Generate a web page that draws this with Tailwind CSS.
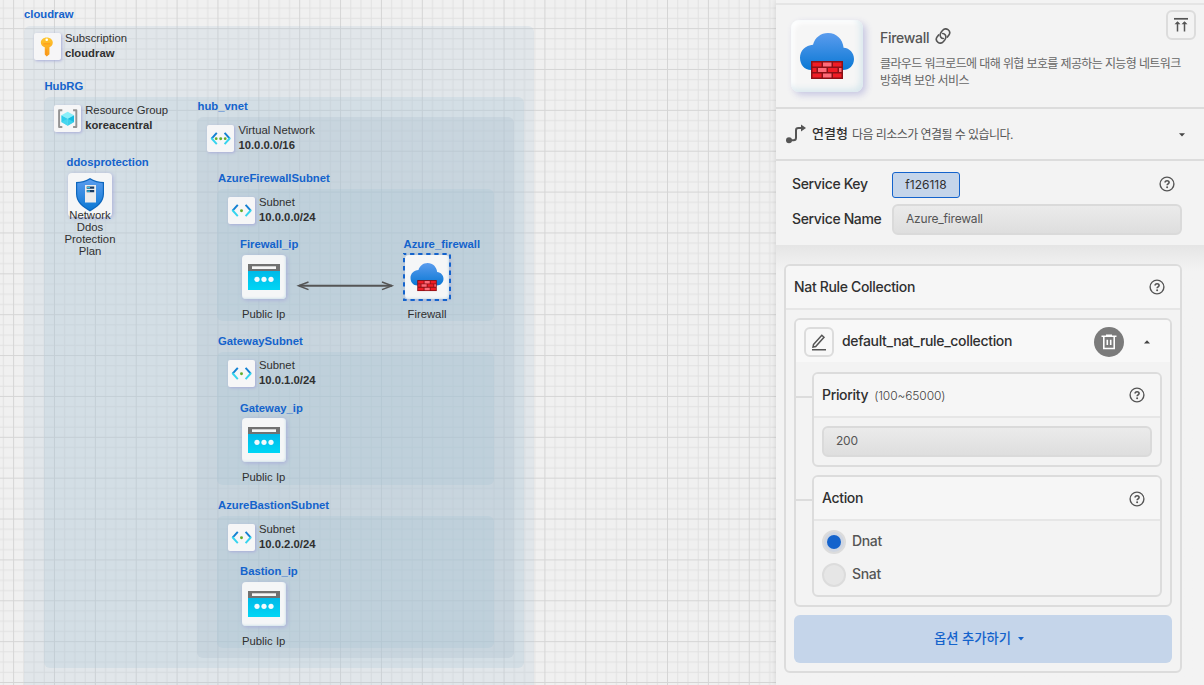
<!DOCTYPE html>
<html lang="ko">
<head>
<meta charset="utf-8">
<title>cloudraw</title>
<script src="https://cdn.jsdelivr.net/npm/@tailwindcss/browser@4"></script>
</head>
<body class="w-[1204px] h-[685px] overflow-hidden bg-[#f0f0f0] font-['Inter','Noto_Sans_CJK_KR',sans-serif]">
<svg class="absolute size-0">
  <defs>
    <linearGradient id="gKey" x1="0" y1="0" x2="0" y2="1"><stop offset="0" stop-color="#ffc72e"/><stop offset="1" stop-color="#f79a1b"/></linearGradient>
    <linearGradient id="gBlue" x1="0" y1="0" x2="0" y2="1"><stop offset="0" stop-color="#5b9cee"/><stop offset="1" stop-color="#0a78d4"/></linearGradient>
    <linearGradient id="gCy" x1="0" y1="0" x2="0" y2="1"><stop offset="0" stop-color="#00b9e8"/><stop offset="1" stop-color="#00d6f5"/></linearGradient>
  </defs>
  <symbol id="key" viewBox="0 0 28 28"><path d="M13 4.500c3.600 0 6.200 2.200 6.200 5.200 0 2.400-1.400 4.100-3.400 4.900v7.200L13 24l-2-2V14.600C8.600 13.700 7 12.100 7 9.700 7 6.700 9.500 4.500 13 4.500z" fill="url(#gKey)"/><circle cx="13" cy="7" r="1.300" fill="#fff"/><path d="M9.700 10.500h6.800v1.300H9.700z" fill="#ff9b1a"/><path d="M12 16.500h.8v5.500h-.8z" fill="#ff8c1a"/></symbol>
  <symbol id="rg" viewBox="0 0 28 28"><path d="M8.500 5.300H5.200v17.200h3.300M19.500 5.300h3.300v17.200h-3.300" fill="none" stroke="#949494" stroke-width="2" stroke-linejoin="round"/><path d="M14 7l6.500 3.500L14 14 7.500 10.500z" fill="#8aeffa"/><path d="M7.500 10.500L14 14v7.300l-6.500-3.800z" fill="#30cdea"/><path d="M20.500 10.500L14 14v7.300l6.500-3.800z" fill="#16bde2"/><path d="M7.500 17.500L14 14l6.500 3.500L14 21.300z" fill="#55dcf2" opacity=".6"/></symbol>
  <symbol id="angles" viewBox="0 0 28 28"><g fill="none" stroke-width="2" stroke-linecap="butt"><path d="M10 8l-5.300 6" stroke="#1380d2"/><path d="M4.400 13.300l5.600 6.200" stroke="#35d4ee"/><path d="M18 8l5.300 6" stroke="#1380d2"/><path d="M23.600 13.300L18 19.500" stroke="#35d4ee"/></g></symbol>
  <symbol id="subnet" viewBox="0 0 28 28"><use href="#angles"/><circle cx="13.800" cy="14" r="1.500" fill="#62ad2b"/></symbol>
  <symbol id="vnet" viewBox="0 0 28 28"><use href="#angles"/><g fill="#62ad2b"><circle cx="9.400" cy="14" r="1.400"/><circle cx="14" cy="14" r="1.500"/><circle cx="18.600" cy="14" r="1.400"/></g></symbol>
  <symbol id="ip" viewBox="0 0 44 44"><path d="M6 9h32v8H6z" fill="#717171"/><path d="M10 11.300h24v2.700H10z" fill="#f6f6f6"/><path d="M6 16h32v19H6z" fill="url(#gCy)"/><g fill="#f3fafd"><circle cx="15" cy="24.300" r="2.600"/><circle cx="22" cy="24.300" r="2.600"/><circle cx="29" cy="24.300" r="2.600"/></g></symbol>
  <symbol id="fw" viewBox="0 0 72 72"><path d="M20 50C13.500 50 9 44.500 9 37.700c0-7.200 5.500-12.600 13-13C24 17.500 29.800 13 37 13c8.600 0 14.700 6.300 15.600 14.700C58.700 28 63 33 63 39c0 6.400-4.800 11-11 11z" fill="url(#gBlue)"/><path d="M20 41h32v18H20z" fill="#8a1016"/><g fill="#f01c25"><path d="M21.500 42.500h9v4h-9zM42 42.500h8.500v4H42zM21.500 48h4v4h-4zM37 48h9.500v4H37zM21.500 53.500h9v4h-9zM42 53.500h8.500v4H42z"/></g><g fill="#ff6a78"><path d="M32 42.500h8.500v4H32zM27 48h8.500v4H27zM48 48h2.500v4H48zM32 53.500h8.500v4H32z"/></g></symbol>
  <symbol id="shield" viewBox="0 0 44 44"><path d="M22 5c4 3 9 3.800 14 4v12c0 8-6.500 13.200-14 17.500C14.500 34.200 8 29 8 21V9c5-.2 10-1 14-4z" fill="#0d66bd"/><path d="M22 6.500c4 2.500 8.300 3.400 12.800 3.700V21c0 7.200-6 12.200-12.800 16.100C15.200 33.200 9.200 28.200 9.200 21V10.200c4.500-.3 8.800-1.200 12.800-3.700z" fill="url(#gBlue)"/><path d="M17 12h11v17.500H17z" fill="#ececec"/><path d="M18.700 13.500h7.500v2.300h-7.500zM18.700 17h7.500v2.300h-7.500z" fill="#173a63"/><path d="M19 14h3v1.200h-3zM19 17.500h3v1.200h-3z" fill="#35c5e8"/></symbol>
  <symbol id="help" viewBox="0 0 16 16"><circle cx="8" cy="8" r="6.900" fill="none" stroke="#555" stroke-width="1.400"/><path d="M6.100 6.600c0-1.200.8-1.900 2-1.900s2 .7 2 1.700c0 1.400-2 1.500-2 2.900" fill="none" stroke="#555" stroke-width="1.600"/><circle cx="8.100" cy="11.200" r="1" fill="#555"/></symbol>
</svg>
<div class="flex h-full">
  <!-- diagram canvas -->
  <main class="relative w-[776px] h-full shrink-0 overflow-hidden font-['Liberation_Sans',sans-serif] text-[11.300px] leading-[14px] text-[#303030] whitespace-nowrap">
    <svg class="absolute inset-0" width="776" height="685">
      <defs><pattern id="grid" x="13.100" y="28.100" width="40.870" height="40.870" patternUnits="userSpaceOnUse">
        <path d="M10.700 0v40.870M20.900 0v40.870M31.150 0v40.870M0 10.700h40.870M0 20.900h40.870M0 31.150h40.870" stroke="#e1e1e1" stroke-width="1"/>
        <path d="M.5 0v40.870M0 .5h40.870" stroke="#d5d5d5" stroke-width="1"/>
      </pattern></defs>
      <rect width="776" height="685" fill="url(#grid)"/>
    </svg>
    <div class="absolute left-[24px] top-[26px] w-[510px] h-[680px] rounded-md bg-[#b3c7d7]/25"></div>
    <div class="absolute left-[44px] top-[97px] w-[480px] h-[571px] rounded-md bg-[#acc8d8]/25"></div>
    <div class="absolute left-[197px] top-[117px] w-[317px] h-[541px] rounded-md bg-[#a7bdcc]/25"></div>
    <div class="absolute left-[217px] top-[189px] w-[277px] h-[132px] rounded-md bg-[#a4c3d3]/25"></div>
    <div class="absolute left-[217px] top-[352px] w-[277px] h-[133px] rounded-md bg-[#a4c3d3]/25"></div>
    <div class="absolute left-[217px] top-[516px] w-[277px] h-[132px] rounded-md bg-[#a4c3d3]/25"></div>

    <div class="font-bold text-[#1463cc]">
      <span class="absolute left-[24px] top-[7px]">cloudraw</span>
      <span class="absolute left-[44.400px] top-[79px]">HubRG</span>
      <span class="absolute left-[66.500px] top-[155px]">ddosprotection</span>
      <span class="absolute left-[197.500px] top-[99px]">hub_vnet</span>
      <span class="absolute left-[218px] top-[171px]">AzureFirewallSubnet</span>
      <span class="absolute left-[240px] top-[237px]">Firewall_ip</span>
      <span class="absolute left-[403.500px] top-[237px]">Azure_firewall</span>
      <span class="absolute left-[218px] top-[334px]">GatewaySubnet</span>
      <span class="absolute left-[240px] top-[401px]">Gateway_ip</span>
      <span class="absolute left-[218px] top-[498px]">AzureBastionSubnet</span>
      <span class="absolute left-[240px] top-[564px]">Bastion_ip</span>
    </div>

    <div class="absolute left-[34px] top-[32px] flex gap-[3.500px]"><div class="mt-[0.700px] size-[27.400px] rounded-xs bg-[#f6f6f7] shadow-[1px_1px_3px_#a9add8]"><svg class="size-[27.400px]"><use href="#key"/></svg></div><div class="-mt-px leading-[15px]">Subscription<br><b>cloudraw</b></div></div>
    <div class="absolute left-[54px] top-[104px] flex gap-[3.800px]"><div class="mt-[0.700px] size-[27.400px] rounded-xs bg-[#f6f6f7] shadow-[1px_1px_3px_#a9add8]"><svg class="size-[27.400px]"><use href="#rg"/></svg></div><div class="-mt-px leading-[15px]">Resource Group<br><b>koreacentral</b></div></div>
    <div class="absolute left-[207px] top-[124px] flex gap-[4px]"><div class="mt-[0.700px] size-[27.400px] rounded-xs bg-[#f6f6f7] shadow-[1px_1px_3px_#a9add8]"><svg class="size-[27.400px]"><use href="#vnet"/></svg></div><div class="-mt-px leading-[15px]">Virtual Network<br><b>10.0.0.0/16</b></div></div>
    <div class="absolute left-[227.700px] top-[196px] flex gap-[3.900px]"><div class="mt-[0.700px] size-[27.400px] rounded-xs bg-[#f6f6f7] shadow-[1px_1px_3px_#a9add8]"><svg class="size-[27.400px]"><use href="#subnet"/></svg></div><div class="-mt-px leading-[15px]">Subnet<br><b>10.0.0.0/24</b></div></div>
    <div class="absolute left-[227.700px] top-[359px] flex gap-[3.900px]"><div class="mt-[0.700px] size-[27.400px] rounded-xs bg-[#f6f6f7] shadow-[1px_1px_3px_#a9add8]"><svg class="size-[27.400px]"><use href="#subnet"/></svg></div><div class="-mt-px leading-[15px]">Subnet<br><b>10.0.1.0/24</b></div></div>
    <div class="absolute left-[227.700px] top-[523px] flex gap-[3.900px]"><div class="mt-[0.700px] size-[27.400px] rounded-xs bg-[#f6f6f7] shadow-[1px_1px_3px_#a9add8]"><svg class="size-[27.400px]"><use href="#subnet"/></svg></div><div class="-mt-px leading-[15px]">Subnet<br><b>10.0.2.0/24</b></div></div>

    <div class="absolute left-[68px] top-[173px] size-11 rounded-sm bg-[#f5f6f7] shadow-[1px_1px_4px_#a9add8]"><svg class="size-11"><use href="#shield"/></svg></div>
    <div class="absolute left-[60px] top-[209px] w-[60px] text-center leading-[12.100px]">Network<br>Ddos<br>Protection<br>Plan</div>

    <div class="absolute left-[241.700px] top-[255px] size-11 rounded-sm bg-[#f5f6f7] shadow-[1px_1px_4px_#a9add8,inset_-1px_-1px_2px_#d5e5ec]"><svg class="size-11"><use href="#ip"/></svg></div>
    <div class="absolute left-[242px] top-[307px]">Public Ip</div>
    <div class="absolute left-[241.700px] top-[418.300px] size-11 rounded-sm bg-[#f5f6f7] shadow-[1px_1px_4px_#a9add8,inset_-1px_-1px_2px_#d5e5ec]"><svg class="size-11"><use href="#ip"/></svg></div>
    <div class="absolute left-[242px] top-[470px]">Public Ip</div>
    <div class="absolute left-[241.700px] top-[582px] size-11 rounded-sm bg-[#f5f6f7] shadow-[1px_1px_4px_#a9add8,inset_-1px_-1px_2px_#d5e5ec]"><svg class="size-11"><use href="#ip"/></svg></div>
    <div class="absolute left-[242px] top-[634px]">Public Ip</div>

    <svg class="absolute left-[296px] top-[278px]" width="100" height="16" fill="none" stroke="#555" stroke-width="1.500"><path d="M3 7.700h93" stroke-width="2"/><path d="M12.500 4L2.500 7.700l10 3.900M86 4l10 3.700-10 3.900"/></svg>

    <div class="absolute left-[405px] top-[255px] size-11 rounded-sm bg-[#f5f6f7] shadow-[1px_1px_4px_#a9add8,inset_-1px_-1px_2px_#d5e5ec]"><svg class="size-11"><use href="#fw"/></svg></div>
    <svg class="absolute left-[402px] top-[252px]" width="50" height="50"><rect x="2" y="2" width="46" height="46" fill="none" stroke="#1463cc" stroke-width="2" stroke-dasharray="4.300 3.777" stroke-dashoffset="2"/></svg>
    <div class="absolute left-[407.500px] top-[307px]">Firewall</div>
  </main>

  <!-- properties panel -->
  <aside class="relative z-10 w-[428px] h-full bg-[#f3f3f3] shadow-[0_0_6px_#00000022] flex flex-col text-[#303030]">
    <div class="h-[5px] shrink-0 border-b-2 border-[#e5e5e5]"></div>
    <header class="h-[104px] shrink-0 border-b-2 border-[#dcdcdc] flex pl-[15px] pt-[15px]">
      <div class="size-[72px] rounded-lg bg-[#f6f6f6] shadow-[3px_3px_7px_#c6c6e2,inset_-3px_-3px_6px_#d9e8ee,inset_3px_3px_5px_#fff]"><svg class="size-[72px]"><use href="#fw"/></svg></div>
      <div class="ml-[17px] pt-[8px] w-[310px] shrink-0">
        <div class="flex items-center h-[18px] gap-[6px] text-[14px] text-[#555] font-medium tracking-[-0.280px]"><span>Firewall</span>
          <svg width="16" height="16" viewBox="0 0 16 16" class="-mt-[3px]" fill="none" stroke="#555" stroke-width="1.600" stroke-linecap="round"><path d="M8.300 10.500C6.200 10.300 4.900 8.500 5.200 6.500c.1-1 .5-1.600 1-2.400L7.500 2.500C9 .8 11.300.5 13 1.700c1.800 1.300 2.100 3.600.9 5.400l-1.500 2"/><path d="M7.700 5.500c2.100.2 3.400 2 3.100 4-.1 1-.5 1.600-1 2.400l-1.300 1.600c-1.500 1.700-3.800 2-5.500.8C1.200 13 .9 10.700 2.100 8.900l1.500-2"/></svg>
        </div>
        <p class="mt-[9px] text-[12px] leading-[17px] tracking-[-0.620px] text-[#666] whitespace-nowrap">클라우드 워크로드에 대해 위협 보호를 제공하는 지능형 네트워크<br>방화벽 보안 서비스</p>
      </div>
      <div class="-ml-[24px] -mt-[10px] size-[30px] shrink-0 rounded-md border-2 border-[#dcdcdc] flex items-center justify-center"><svg width="16" height="16" fill="none" stroke="#555" stroke-width="1.500"><path d="M1 1.800h14" stroke-width="1.700"/><path d="M4.500 14.500v-9M11.500 14.500v-9"/><path d="M1.500 7.200l3-3 3 3zM8.500 7.200l3-3 3 3z" fill="#555" stroke="none"/></svg></div>
    </header>
    <div class="h-[52px] shrink-0 border-b-2 border-[#dcdcdc] flex items-center pl-[10px] pr-[19px]">
      <svg width="20" height="20" fill="none" stroke="#555" stroke-width="2"><circle cx="3" cy="16.300" r="3" fill="#555" stroke="none"/><path d="M3 16.300h4.500c1.800 0 2.500-.8 2.500-2.500V6.300C10 4.600 10.700 4 12.500 4H16"/><path d="M15 .6L20 4l-5 3.500z" fill="#555" stroke="none"/></svg>
      <span class="ml-[6px] text-[13px] font-medium">연결형</span><span class="ml-1 mt-px text-[12px] tracking-[-0.550px] text-[#555]">다음 리소스가 연결될 수 있습니다.</span>
      <svg class="ml-auto mt-[2px]" width="6" height="4"><path d="M0 .3h6L3 3.600z" fill="#444"/></svg>
    </div>
    <div class="h-[84px] shrink-0 pl-4 pr-[22px] pt-[11px] flex flex-col gap-[6px] text-[14px] font-medium tracking-[-0.360px]">
      <div class="flex items-center h-[26px]"><span class="w-[100px] -mt-[3px]">Service Key</span><span class="w-[68px] h-[26px] rounded-[3px] border border-[#1463cc] bg-[#c5d5ea] text-[12px] font-normal tracking-normal flex items-center justify-center">f126118</span><svg class="ml-auto mr-[7px] -mt-[2px] size-4"><use href="#help"/></svg></div>
      <div class="flex items-center h-[31px]"><span class="w-[100px] -mt-[2px]">Service Name</span><span class="flex-1 h-[31px] rounded-md border-2 border-[#dadada] bg-linear-to-b from-[#ebebeb] to-[#dedede] text-[12px] leading-[25px] font-normal tracking-[-0.200px] text-[#555] pl-3">Azure_firewall</span></div>
    </div>
    <div class="flex-1 pl-2 pr-[22px] pt-[19px] bg-linear-to-b from-[#e5e5e5] to-[#f3f3f3] to-[26px] tracking-[-0.330px]">
      <section class="h-[409px] rounded-md border-2 border-[#dcdcdc] bg-[#f3f3f3] overflow-hidden">
        <div class="h-[44px] border-b-2 border-[#e6e6e6] bg-[#f6f6f6] flex items-center justify-between pl-2 pr-[15px] text-[14px] font-medium"><span class="-mt-[2px]">Nat Rule Collection</span><svg class="size-4"><use href="#help"/></svg></div>
        <div class="px-2 pt-2">
          <div class="h-[289px] rounded-md border-2 border-[#dcdcdc] overflow-hidden">
            <div class="h-[42px] bg-[#f8f8f8] flex items-center pl-2 pr-[20px] text-[14px] font-medium">
              <div class="size-[30px] mt-px rounded-md border-2 border-[#dcdcdc] flex items-center justify-center"><svg width="16" height="18" fill="none" stroke="#555" stroke-width="1.500"><path d="M2.500 11.500L10.800 2.300l2.200 2-8.300 9.200-2.700.6zM1 16.800h14"/></svg></div>
              <span class="ml-2 -mt-[2px]">default_nat_rule_collection</span>
              <div class="ml-auto mt-px size-[30px] rounded-full bg-[#7b7b7b] flex items-center justify-center"><svg width="16" height="16" fill="none" stroke="#fff" stroke-width="1.600"><path d="M.5 2.300h15M5 1.200h6M2.800 2.500v12h10.400v-12M6.300 5.800V11M9.700 5.800V11"/></svg></div>
              <svg class="ml-5 mt-px" width="6" height="4"><path d="M0 3.600h6L3 .3z" fill="#444"/></svg>
            </div>
            <div class="pt-[10px] pr-2 flex flex-col gap-2">
              <div class="flex"><div class="w-4 h-[26px] border-b-2 border-[#dcdcdc]"></div>
                <div class="flex-1 h-[95px] rounded-md border-2 border-[#dcdcdc] overflow-hidden">
                  <div class="h-11 border-b-2 border-[#e6e6e6] bg-[#f6f6f6] flex items-center pl-2 pr-[15px] text-[14px] font-medium"><span class="-mt-px">Priority</span><span class="ml-[6px] mt-px text-[12px] font-light tracking-[-0.100px] text-[#444]">(100~65000)</span><svg class="ml-auto size-4"><use href="#help"/></svg></div>
                  <div class="px-2 pt-2"><div class="h-[31px] rounded-md border-2 border-[#dadada] bg-linear-to-b from-[#ebebeb] to-[#dedede] text-[12px] leading-[25px] tracking-[-0.200px] text-[#555] pl-3">200</div></div>
                </div>
              </div>
              <div class="flex"><div class="w-4 h-[26px] border-b-2 border-[#dcdcdc]"></div>
                <div class="flex-1 h-[122px] rounded-md border-2 border-[#dcdcdc] overflow-hidden">
                  <div class="h-11 border-b-2 border-[#e6e6e6] bg-[#f6f6f6] flex items-center justify-between pl-2 pr-[15px] text-[14px] font-medium"><span class="-mt-px">Action</span><svg class="mt-px size-4"><use href="#help"/></svg></div>
                  <div class="pl-2 pt-[9px] flex flex-col gap-[9px] text-[14px] font-medium text-[#555]">
                    <div class="flex items-center gap-[6px] h-6"><span class="size-6 rounded-full border-2 border-[#dcdcdc] bg-[#cfd6e2] flex items-center justify-center"><i class="size-[14px] rounded-full bg-[#1463cc]"></i></span><span class="-mt-[3px]">Dnat</span></div>
                    <div class="flex items-center gap-[6px] h-6"><span class="size-6 rounded-full border-2 border-[#dcdcdc] bg-[#e6e6e6]"></span><span class="-mt-[3px]">Snat</span></div>
                  </div>
                </div>
              </div>
            </div>
          </div>
          <button class="mt-2 w-full h-12 rounded-md bg-[#c5d5ea] text-[#1463cc] text-[13.300px] tracking-normal font-medium flex items-center justify-center gap-[7px] pr-2"><span>옵션 추가하기</span><svg width="6" height="4"><path d="M0 0h6L3 3.500z" fill="#1463cc"/></svg></button>
        </div>
      </section>
    </div>
  </aside>
</div>
</body>
</html>
